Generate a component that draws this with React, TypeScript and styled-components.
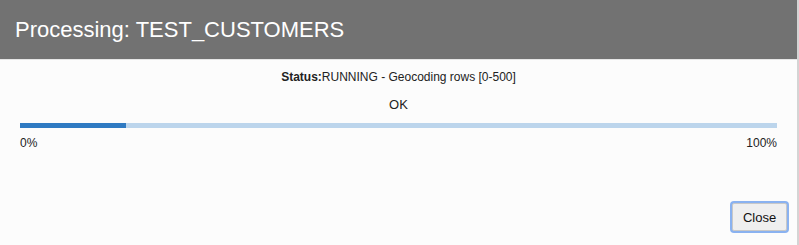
import React from "react";
import styled, { createGlobalStyle } from "styled-components";

const Global = createGlobalStyle`
  html, body { margin: 0; padding: 0; background: #fcfcfc; }
  body { font-family: "Liberation Sans", Arial, Helvetica, sans-serif; }
`;

const Dialog = styled.div`
  width: 797px;
  height: 245px;
  border-right: 2px solid #d4d4d4;
  background: #fcfcfc;
  display: flex;
  flex-direction: column;
`;

const Header = styled.div`
  height: 60px;
  background: #727272;
  border-bottom: 1px solid #e6e6e6;
  display: flex;
  align-items: center;
  padding-left: 15px;
  color: #ffffff;
  font-size: 22px;
  box-sizing: border-box;
`;

const Body = styled.div`
  flex: 1;
  padding: 0 20px;
  display: flex;
  flex-direction: column;
`;

const Status = styled.div`
  margin-top: 10px;
  text-align: center;
  font-size: 12px;
  color: #222;
  line-height: 15px;
`;

const Bold = styled.b`
  font-weight: bold;
`;

const Ok = styled.div`
  margin-top: 12px;
  text-align: center;
  font-size: 13px;
  color: #222;
  line-height: 15px;
`;

const Track = styled.div`
  margin-top: 11px;
  height: 5px;
  background: #bcd5ec;
`;

const Fill = styled.div`
  height: 100%;
  background: #2f7ac2;
`;

const Labels = styled.div`
  margin-top: 8px;
  display: flex;
  justify-content: space-between;
  font-size: 12px;
  color: #222;
  line-height: 14px;
`;

const Footer = styled.div`
  margin-top: auto;
  display: flex;
  justify-content: flex-end;
  padding: 0 10px 14px 0;
`;

const Button = styled.button`
  width: 55px;
  height: 28px;
  font-family: "Liberation Sans", Arial, sans-serif;
  font-size: 13px;
  color: #111;
  background: #efefef;
  border: 1px solid #c8c8c8;
  border-radius: 2px;
  box-shadow: 0 0 0 2px #8ab2f0;
  padding: 0;
`;

export default function App() {
  const pct = 14;
  return (
    <>
      <Global />
      <Dialog>
        <Header>Processing: TEST_CUSTOMERS</Header>
        <Body>
          <Status>
            <Bold>Status:</Bold>RUNNING - Geocoding rows [0-500]
          </Status>
          <Ok>OK</Ok>
          <Track>
            <Fill style={{ width: `${pct}%` }} />
          </Track>
          <Labels>
            <span>0%</span>
            <span>100%</span>
          </Labels>
        </Body>
        <Footer>
          <Button>Close</Button>
        </Footer>
      </Dialog>
    </>
  );
}
